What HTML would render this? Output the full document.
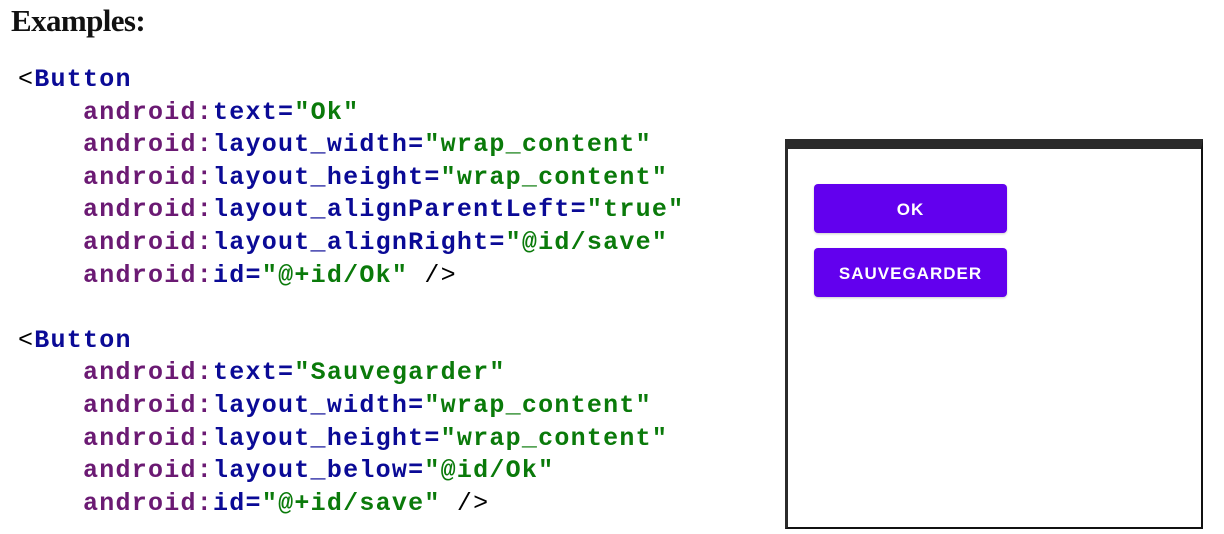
<!DOCTYPE html>
<html><head><meta charset="utf-8"><style>
body{margin:0;width:1224px;height:534px;background:#fff;position:relative;overflow:hidden}
h1{position:absolute;left:11px;top:3px;margin:0;font:bold 31px "Liberation Serif",serif;color:#111;letter-spacing:-0.6px}
.code{position:absolute;left:18px;top:64px;font:bold 25px/32.6px "Liberation Mono",monospace;letter-spacing:1.25px;white-space:pre;color:#000}
.p{color:#6b1a73}.b{color:#0a0a96}.g{color:#0a7a0a}.n{font-weight:normal}
.frame{position:absolute;left:785px;top:139px;width:413px;height:378px;border:2px solid #111;border-top:10px solid #2b2b2b;border-left:3px solid #2b2b2b}
.btn{position:absolute;left:26px;width:193px;height:49px;background:#6200ee;border-radius:4px;color:#fff;font:bold 17px/52px "Liberation Sans",sans-serif;letter-spacing:1px;text-align:center;box-shadow:0 1px 2px rgba(0,0,0,.2)}
</style></head><body>
<h1>Examples:</h1>
<div class="code"><span class="n">&lt;</span><span class="b">Button</span>
    <span class="p">android:</span><span class="b">text=</span><span class="g">"Ok"</span>
    <span class="p">android:</span><span class="b">layout_width=</span><span class="g">"wrap_content"</span>
    <span class="p">android:</span><span class="b">layout_height=</span><span class="g">"wrap_content"</span>
    <span class="p">android:</span><span class="b">layout_alignParentLeft=</span><span class="g">"true"</span>
    <span class="p">android:</span><span class="b">layout_alignRight=</span><span class="g">"@id/save"</span>
    <span class="p">android:</span><span class="b">id=</span><span class="g">"@+id/Ok"</span> <span class="n">/&gt;</span>

<span class="n">&lt;</span><span class="b">Button</span>
    <span class="p">android:</span><span class="b">text=</span><span class="g">"Sauvegarder"</span>
    <span class="p">android:</span><span class="b">layout_width=</span><span class="g">"wrap_content"</span>
    <span class="p">android:</span><span class="b">layout_height=</span><span class="g">"wrap_content"</span>
    <span class="p">android:</span><span class="b">layout_below=</span><span class="g">"@id/Ok"</span>
    <span class="p">android:</span><span class="b">id=</span><span class="g">"@+id/save"</span> <span class="n">/&gt;</span></div>
<div class="frame">
<div class="btn" style="top:35px">OK</div>
<div class="btn" style="top:99px">SAUVEGARDER</div>
</div>
</body></html>
